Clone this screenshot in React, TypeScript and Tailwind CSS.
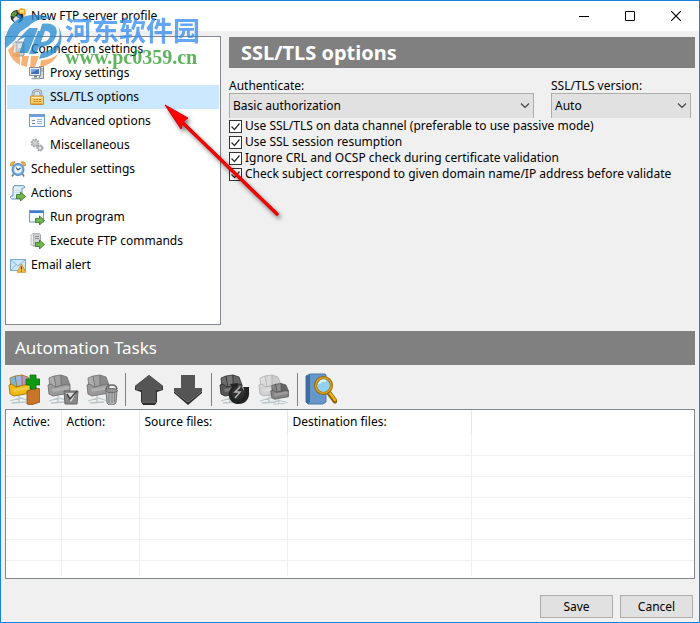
import { useState, type ReactNode } from 'react';

const svg16 = 'h-4 w-4 shrink-0';

const AppIcon = () => (
  <svg viewBox="0 0 16 16" className={svg16}>
    <circle cx="7" cy="8.5" r="6.5" fill="#26333b" />
    <path d="M2 5l4-2 1 3-3 3-3-1z" fill="#5f9a38" />
    <path d="M3 11l3-3 4 3-2 4H5z" fill="#dfe9ec" />
    <path d="M8 6l3 2-1 3-3-2z" fill="#3b83c4" />
    <path d="M7 3l4-3 4 1 1 5-3 3 0-3-3 0z" fill="#f6a623" />
    <path d="M10 2l4 0 0 4-2-2-2 1z" fill="#ffe08a" />
  </svg>
);

const ServerIcon = () => (
  <svg viewBox="0 0 16 16" className={svg16}>
    <path d="M5 1h8l1 1v12l-1 1H5z" fill="#c9ced2" stroke="#8f979d" />
    <path d="M3 2l3-1v14l-3-1z" fill="#eceff1" stroke="#9aa2a8" strokeWidth=".6" />
    <path d="M8 4h4M8 6h4" stroke="#fff" />
    <circle cx="11" cy="11" r="1" fill="#6bb344" />
  </svg>
);

const ProxyIcon = () => (
  <svg viewBox="0 0 16 16" className={svg16}>
    <path d="M10.5 1.5h4v12h-4z" fill="#d4d7da" stroke="#858b91" />
    <path d="M11.5 4h2M11.5 6h2" stroke="#7d848a" />
    <rect x=".5" y="2.5" width="11" height="8" fill="#e8ebee" stroke="#8a929a" />
    <rect x="2" y="4" width="8" height="5" fill="#3f70b5" />
    <path d="M2 4h8L2 8z" fill="#7da6e0" />
    <path d="M5 11h3v1.5H5z" fill="#777f87" />
    <path d="M2.5 13.5h8" stroke="#9aa1a7" strokeWidth="1.6" />
  </svg>
);

const LockIcon = () => (
  <svg viewBox="0 0 16 16" className={svg16}>
    <path d="M4 8V4.5C4 2.5 5.5 1.3 8 1.3S12 2.5 12 4.5V8" fill="none" stroke="#85888b" strokeWidth="2.6" />
    <path d="M4 8V4.5C4 2.5 5.5 1.3 8 1.3S12 2.5 12 4.5V8" fill="none" stroke="#d4d6d8" strokeWidth="1.2" />
    <rect x="1.5" y="7" width="13" height="8.5" rx=".6" fill="#f7cd68" stroke="#c68a30" />
    <path d="M2.5 8.5h11" stroke="#ffecb0" />
    <path d="M4.5 10.5h2M4.5 12.5h2M7.2 10.5h2M7.2 12.5h2M10 10.5h2M10 12.5h2" stroke="#bb7d22" />
    <path d="M2.5 14.5h11" stroke="#e5aa40" />
  </svg>
);

const FormIcon = () => (
  <svg viewBox="0 0 16 16" className={svg16}>
    <rect x=".5" y="1.5" width="15" height="12" fill="#f5f9fd" stroke="#6e9bd2" />
    <path d="M1 3h14" stroke="#4f88d0" strokeWidth="1.6" />
    <path d="M3 7.5h3M3 10.5h3" stroke="#6b8bb4" />
    <path d="M8 6.5h5M8 8.5h5M8 10.5h5" stroke="#9ab6d8" />
  </svg>
);

const GearsIcon = () => (
  <svg viewBox="0 0 16 16" className={svg16}>
    <circle cx="6" cy="6" r="3.5" fill="#cfd1d3" stroke="#a6a9ab" strokeWidth="2" strokeDasharray="1.6 1.1" />
    <circle cx="6" cy="6" r="3" fill="#d0d2d4" stroke="#b0b3b5" />
    <circle cx="6" cy="6" r="1.2" fill="#fff" stroke="#999" strokeWidth=".6" />
    <circle cx="11" cy="11" r="2.5" fill="#c3c5c7" stroke="#979a9c" strokeWidth="2" strokeDasharray="1.3 1" />
    <circle cx="11" cy="11" r="2.2" fill="#c9cbcd" stroke="#a3a6a8" />
    <circle cx="11" cy="11" r=".9" fill="#fff" />
  </svg>
);

const ClockIcon = () => (
  <svg viewBox="0 0 16 16" className={svg16}>
    <path d="M3.5 13l-1.5 2.5M12.5 13l1.5 2.5" stroke="#6d7a86" strokeWidth="1.6" />
    <path d="M.5 4.5C0 2 2 .3 5 1L2 5zM15.5 4.5C16 2 14 .3 11 1l3 4z" fill="#f4b347" stroke="#b9781f" strokeWidth=".7" />
    <circle cx="8" cy="8.5" r="6" fill="#6ba6df" stroke="#3b74b2" strokeWidth=".8" />
    <circle cx="8" cy="8.5" r="4" fill="#f2f9ff" stroke="#9ac6ec" strokeWidth=".6" />
    <path d="M6 6.5l2 2.5 2.5-2" fill="none" stroke="#2e4b68" strokeWidth="1.2" />
  </svg>
);

const GreenArrow = () => (
  <path d="M6.5 9.5h4V7l5 4.500-5 4.500v-2.500h-4z" fill="#74b64d" stroke="#3c7a28" strokeWidth=".9" />
);

const ScriptIcon = () => (
  <svg viewBox="0 0 16 16" className={svg16}>
    <path d="M4 .7h9.5c1.5 0 1.5 2.5 0 2.5H12V14H2.5C0 14 0 11 1.5 11H3V3z" fill="#e3effa" stroke="#5d8fc4" />
    <path d="M5 5.5h5M5 7.5h5" stroke="#c4d9ee" />
    <GreenArrow />
  </svg>
);

const ProgramIcon = () => (
  <svg viewBox="0 0 16 16" className={svg16}>
    <rect x=".5" y="1.5" width="14" height="11.5" fill="#f3f8fd" stroke="#6e9bd2" />
    <path d="M1 3h13.5" stroke="#3f7ccb" strokeWidth="2" />
    <GreenArrow />
  </svg>
);

const CommandsIcon = () => (
  <svg viewBox="0 0 16 16" className={svg16}>
    <path d="M4 .7h6l1.5 1V12l-1 1H4z" fill="#d0d2d4" stroke="#a0a3a6" />
    <path d="M2 2l2.5-1.300V13L2 12z" fill="#eee" stroke="#aaa" strokeWidth=".7" />
    <path d="M6 3.5h4M6 5.5h4" stroke="#909090" />
    <GreenArrow />
  </svg>
);

const MailIcon = () => (
  <svg viewBox="0 0 16 16" className={svg16}>
    <rect x=".5" y="2.5" width="15" height="11" fill="#cfe6f8" stroke="#79acd4" />
    <path d="M1 3l7 6 7-6M1 13l5-5.5M15 13l-5-5.5" fill="none" stroke="#86b8dd" />
    <path d="M11.5 7l4.2 8.3H7.3z" fill="#fcc43c" stroke="#c9861a" strokeWidth=".8" />
    <path d="M11.5 9.5v3M11.5 13.5v1" stroke="#5a3a06" strokeWidth="1.2" />
  </svg>
);

const treeItems: { label: string; icon: ReactNode; child?: boolean }[] = [
  { label: 'Connection settings', icon: <ServerIcon /> },
  { label: 'Proxy settings', icon: <ProxyIcon />, child: true },
  { label: 'SSL/TLS options', icon: <LockIcon />, child: true },
  { label: 'Advanced options', icon: <FormIcon />, child: true },
  { label: 'Miscellaneous', icon: <GearsIcon />, child: true },
  { label: 'Scheduler settings', icon: <ClockIcon /> },
  { label: 'Actions', icon: <ScriptIcon /> },
  { label: 'Run program', icon: <ProgramIcon />, child: true },
  { label: 'Execute FTP commands', icon: <CommandsIcon />, child: true },
  { label: 'Email alert', icon: <MailIcon /> },
];

const checks = [
  'Use SSL/TLS on data channel (preferable to use passive mode)',
  'Use SSL session resumption',
  'Ignore CRL and OCSP check during certificate validation',
  'Check subject correspond to given domain name/IP address before validate',
];

// Folder fan used by most of the toolbar buttons
const Folders = ({ front, edge, sheets }: { front: string; edge: string; sheets: string[] }) => (
  <>
    <path d="M2 28l10-3 10 3M4 30l14-1M11 22v7" fill="none" stroke="#b9c7c9" strokeWidth="1.3" />
    <path d="M2 5l5-2 3 10-7 3z" fill={sheets[0]} stroke={edge} strokeWidth=".8" />
    <path d="M7 3l7-1 1 11-6 1z" fill={sheets[1]} stroke={edge} strokeWidth=".8" />
    <path d="M14 2l6 2 3 8-9 3z" fill={sheets[2]} stroke={edge} strokeWidth=".8" />
    <path d="M1 12l3-1 4 3 12-3 3 1v8l-17 3-4-2z" fill={front} stroke={edge} strokeWidth=".9" />
    <path d="M5 16l17-3v3L6 19z" fill="#fff" opacity=".22" />
  </>
);

const gray = { front: '#9a9a9a', edge: '#707070', sheets: ['#adadad', '#a2a2a2', '#8a8a8a'] };
const dark = { front: '#555', edge: '#303030', sheets: ['#6d6d6d', '#777', '#666'] };
const pale = { front: '#d2d2d2', edge: '#b0b0b0', sheets: ['#ddd', '#d8d8d8', '#ccc'] };

const AddTaskIcon = () => (
  <svg viewBox="0 0 32 32" className="h-8 w-8">
    <Folders front="#eebb12" edge="#9a7413" sheets={['#7fb4d8', '#9db6de', '#c48fca']} />
    <path d="M19 18l9-3 4 1v13l-9 3-4-1z" fill="#c8752a" stroke="#8c4c16" strokeWidth=".8" />
    <path d="M22 2h6v4h4v6h-4v4h-6v-4h-4V6h4z" fill="#0e9b12" stroke="#0a6d0c" strokeWidth=".8" />
  </svg>
);

const EditTaskIcon = () => (
  <svg viewBox="0 0 32 32" className="h-8 w-8">
    <Folders {...gray} />
    <path d="M17 18h14l-1 13H18z" fill="#888" stroke="#666" />
    <path d="M19 20h10l-5 9z" fill="#dedede" />
    <path d="M20 21l3 5 7-8" fill="none" stroke="#444" strokeWidth="1.6" />
  </svg>
);

const DeleteTaskIcon = () => (
  <svg viewBox="0 0 32 32" className="h-8 w-8">
    <Folders {...gray} />
    <path d="M20 18h11l-1 12-3 2h-4l-2-2z" fill="#b2b2b2" stroke="#777" />
    <path d="M23 19v11M26 19v11M28.5 19v10" stroke="#808080" />
    <path d="M20 17c0-6 10-7 11-1" fill="none" stroke="#666" strokeWidth="1.6" />
    <ellipse cx="25.5" cy="17.5" rx="6" ry="2" fill="#959595" stroke="#666" />
  </svg>
);

const UpIcon = () => (
  <svg viewBox="0 0 32 32" className="h-8 w-8">
    <path d="M16 2L2 13v4l6 2v10l2 3h12l2-3V19l6-2v-4z" fill="#303030" />
    <path d="M16 2L2 13l1 2h6v13h14V15h6l1-2z" fill="#555" />
    <path d="M3 16h6M23 16h6M9 29h14" stroke="#858585" />
  </svg>
);

const DownIcon = () => (
  <svg viewBox="0 0 32 32" className="h-8 w-8">
    <path d="M9 2h14v14h7v4L16 32 2 20v-4h7z" fill="#303030" />
    <path d="M9 2h14v13h7v2L16 28 2 17v-2h7z" fill="#555" />
    <path d="M2 18l14 11 14-11" fill="none" stroke="#858585" />
  </svg>
);

const RefreshIcon = () => (
  <svg viewBox="0 0 32 32" className="h-8 w-8">
    <Folders {...dark} />
    <path d="M30 14h-6l1 3c1 6-3 9-7 8-5-1-6-6-3-9l3 2 1-8-8 1 2 3c-6 6-3 16 5 17s13-5 12-13z" fill="#242424" />
    <circle cx="19" cy="20" r="6.5" fill="#303030" />
    <path d="M21 14l-5 5 5 0-5 6" fill="none" stroke="#b4b4b4" strokeWidth="1.5" />
  </svg>
);

const CopyIcon = () => (
  <svg viewBox="0 0 32 32" className="h-8 w-8">
    <Folders {...pale} />
    <g transform="translate(12 9) scale(.8 .74)">
      <Folders front="#858585" edge="#4a4a4a" sheets={['#858585', '#8d8d8d', '#666']} />
    </g>
  </svg>
);

const LogIcon = () => (
  <svg viewBox="0 0 32 32" className="h-8 w-8">
    <path d="M1 3l4-2h15l1 1v27l-3 2H3l-2-2z" fill="#6598c9" stroke="#4a78a8" />
    <path d="M1 3l4-1v27l-2 2-2-2z" fill="#3e6e9f" />
    <path d="M24 20l6 8" stroke="#8f6209" strokeWidth="5" strokeLinecap="round" />
    <path d="M24 19l6 8" stroke="#e9ad1c" strokeWidth="2.5" strokeLinecap="round" />
    <circle cx="18.5" cy="12.5" r="8" fill="#8fd0ee" stroke="#956a0d" strokeWidth="3" />
    <circle cx="18.5" cy="12.5" r="7.8" fill="none" stroke="#daa21f" strokeWidth="1.4" />
    <path d="M14 11c1-3 4-4 7-3" fill="none" stroke="#e4f7ff" strokeWidth="2" />
  </svg>
);

const toolbar: ({ label: string; icon: ReactNode } | null)[] = [
  { label: 'Add task', icon: <AddTaskIcon /> },
  { label: 'Edit task', icon: <EditTaskIcon /> },
  { label: 'Delete task', icon: <DeleteTaskIcon /> },
  null,
  { label: 'Move up', icon: <UpIcon /> },
  { label: 'Move down', icon: <DownIcon /> },
  null,
  { label: 'Run task', icon: <RefreshIcon /> },
  { label: 'Duplicate task', icon: <CopyIcon /> },
  null,
  { label: 'View log', icon: <LogIcon /> },
];

const Dropdown = ({ id, label, options }: { id: string; label: string; options: string[] }) => (
  <div>
    <label htmlFor={id} className="block h-4 leading-[18px]">{label}</label>
    <div className="relative">
      <select
        id={id}
        className="block h-[25px] w-full appearance-none rounded-none border border-b-0 border-[#adadad] bg-[#e1e1e1] pr-6 pl-[3px]"
      >
        {options.map((o) => (
          <option key={o}>{o}</option>
        ))}
      </select>
      <svg viewBox="0 0 10 6" className="pointer-events-none absolute top-[10px] right-1 h-[6px] w-[10px]">
        <path d="M1 .5l4 4 4-4" fill="none" stroke="#444" strokeWidth="1.2" />
      </svg>
    </div>
  </div>
);

const CheckOption = ({ label }: { label: string }) => {
  const [on, setOn] = useState(true);
  return (
    <label className="flex h-4 items-center gap-[3px] leading-4 whitespace-nowrap">
      <span className="grid h-[13px] w-[13px] shrink-0">
        <input
          type="checkbox"
          checked={on}
          onChange={() => setOn(!on)}
          className="col-start-1 row-start-1 h-[13px] w-[13px] appearance-none border border-[#333] bg-white"
        />
        {on && (
          <svg viewBox="0 0 13 13" className="pointer-events-none col-start-1 row-start-1 h-[13px] w-[13px]">
            <path d="M2.5 6.5l3 3 5-6" fill="none" stroke="#333" strokeWidth="1.3" />
          </svg>
        )}
      </span>
      {label}
    </label>
  );
};

const Watermark = () => (
  <div className="pointer-events-none absolute top-[13px] left-1 flex gap-[2px] opacity-75">
    <svg viewBox="0 0 58 54" className="h-[54px] w-[58px]">
      <path d="M1 34C-2 16 9 3 26 1c9-1 17 1 23 5-10-3-19 0-25 6l-9 6-5 8z" fill="#1f87d0" />
      <path d="M24 14h9l-5 13-5 12h-9l6-16-9 5z" fill="#1f87d0" />
      <path d="M37 10c12-2 17 4 14 12-2 7-9 11-17 11l-3 7h-7l9-23h7l-4 11c6 0 8-3 9-6s-1-5-5-5h-5z" fill="#1f87d0" />
      <path d="M53 12c5 7 5 19-2 26-5 4-11 6-17 7l2-6c9-2 16-7 18-14 1-4 1-9-1-13z" fill="#1f87d0" />
      <path d="M3 36l7-6-2 9 7-2v14C9 48 5 43 3 36zM17 42h7l-2 11-6-2zM26 42h8l-4 11h-5zM36 46c6 0 12-2 17-6-3 7-10 12-18 13z" fill="#f39a4c" />
    </svg>
    <div>
      <div className="font-['Noto_Sans_CJK_SC',sans-serif] text-[27px] leading-[32px] font-bold whitespace-nowrap text-[#3089f0]">河东软件园</div>
      <div className="font-['Liberation_Serif',serif] text-[20px] leading-[22px] font-bold whitespace-nowrap text-[#289b28]">www.pc0359.cn</div>
    </div>
  </div>
);

const Pointer = () => (
  <svg viewBox="0 0 130 126" className="pointer-events-none absolute top-[98px] left-[158px] h-[126px] w-[130px] drop-shadow-[2px_3px_2px_rgba(0,0,0,0.5)]">
    <path d="M24 24l94 91" stroke="#d00000" strokeWidth="3.4" strokeLinecap="round" />
    <path d="M24 24l94 91" stroke="#f00" strokeWidth="2.4" strokeLinecap="round" />
    <path d="M6 6l23 13-5 4-2 7z" fill="#f00" stroke="#e00000" />
  </svg>
);

const App = () => {
  const [active, setActive] = useState('SSL/TLS options');

  return (
    <div className="relative flex min-h-screen flex-col border border-[#1883d7] bg-[#f0f0f0] font-['Noto_Sans',sans-serif] text-[12px] text-black">
      {/* Title bar */}
      <header className="flex h-[30px] items-center bg-white pl-[9px]">
        <AppIcon />
        <h1 className="ml-[5px] flex-1">New FTP server profile</h1>
        <button aria-label="Minimize" className="grid h-full w-[46px] place-items-center">
          <svg viewBox="0 0 10 10" className="h-[10px] w-[10px]"><path d="M0 5.5h10" stroke="#000" /></svg>
        </button>
        <button aria-label="Maximize" className="grid h-full w-[46px] place-items-center">
          <svg viewBox="0 0 10 10" className="h-[10px] w-[10px]"><path d="M.5.5h9v9h-9z" fill="none" stroke="#000" /></svg>
        </button>
        <button aria-label="Close" className="grid h-full w-[46px] place-items-center">
          <svg viewBox="0 0 10 10" className="h-[10px] w-[10px]"><path d="M0 0l10 10M10 0L0 10" stroke="#000" strokeWidth="1.2" /></svg>
        </button>
      </header>

      <main className="flex flex-1 flex-col px-1 pt-[5px]">
        <div className="flex gap-2">
          {/* Settings tree */}
          <nav className="w-[216px] shrink-0 border border-[#828790] bg-white px-px pb-[47px]">
            {treeItems.map((item) => (
              <button
                key={item.label}
                onClick={() => setActive(item.label)}
                className={`flex h-6 w-full items-center gap-[5px] text-left ${item.child ? 'pl-[22px]' : 'pl-[3px]'} ${active === item.label ? 'bg-[#cce8ff]' : ''}`}
              >
                {item.icon}
                {item.label}
              </button>
            ))}
          </nav>

          {/* Options */}
          <section className="min-w-0 flex-1 pt-px">
            <h2 className="flex h-[31px] items-center bg-[#808080] pl-3 text-[20px] leading-[28px] font-bold text-white">SSL/TLS options</h2>
            <div className="mt-[9px] grid grid-cols-[1fr_140px] gap-[17px] pr-1">
              <Dropdown id="auth" label="Authenticate:" options={['Basic authorization', 'No authorization']} />
              <Dropdown id="version" label="SSL/TLS version:" options={['Auto', 'TLS 1.0', 'TLS 1.2']} />
            </div>
            <div className="mr-[9px] overflow-hidden">
              {checks.map((c) => (
                <CheckOption key={c} label={c} />
              ))}
            </div>
          </section>
        </div>

        {/* Automation tasks */}
        <h2 className="mt-[6px] flex h-[34px] items-center bg-[#808080] pl-[10px] text-[17px] text-white">Automation Tasks</h2>
        <div className="flex h-11 items-center gap-[7px] pt-1 pl-[3px]">
          {toolbar.map((tool, i) =>
            tool ? (
              <button key={tool.label} aria-label={tool.label}>{tool.icon}</button>
            ) : (
              <div key={i} className="h-[33px] w-px bg-[#808080]" />
            ),
          )}
        </div>
        <div className="min-h-[170px] flex-1 border border-[#828790] bg-white">
          <table className="w-full table-fixed border-collapse text-left">
            <thead>
              <tr className="h-6">
                <th className="w-[55px] border-r border-[#e8e8e8] pl-[7px] font-normal">Active:</th>
                <th className="w-[78px] border-r border-[#e8e8e8] pl-[5px] font-normal">Action:</th>
                <th className="w-[148px] border-r border-[#e8e8e8] pl-[5px] font-normal">Source files:</th>
                <th className="w-[184px] border-r border-[#e8e8e8] pl-[5px] font-normal">Destination files:</th>
                <th />
              </tr>
            </thead>
            <tbody>
              {[1, 2, 3, 4, 5, 6].map((row) => (
                <tr key={row} className="h-[21px] border-b border-[#f0f0f0]">
                  <td className="border-r border-[#f0f0f0]" />
                  <td className="border-r border-[#f0f0f0]" />
                  <td className="border-r border-[#f0f0f0]" />
                  <td className="border-r border-[#f0f0f0]" />
                  <td />
                </tr>
              ))}
              <tr className="h-4">
                <td className="border-r border-[#f0f0f0]" />
                <td className="border-r border-[#f0f0f0]" />
                <td className="border-r border-[#f0f0f0]" />
                <td className="border-r border-[#f0f0f0]" />
                <td />
              </tr>
            </tbody>
          </table>
        </div>
      </main>

      <footer className="flex justify-end gap-[7px] pt-4 pr-[6px] pb-1">
        <button className="h-[23px] w-[73px] border border-[#adadad] bg-[#e1e1e1]">Save</button>
        <button className="h-[23px] w-[73px] border border-[#adadad] bg-[#e1e1e1]">Cancel</button>
      </footer>

      <Watermark />
      <Pointer />
    </div>
  );
};

export default App;
